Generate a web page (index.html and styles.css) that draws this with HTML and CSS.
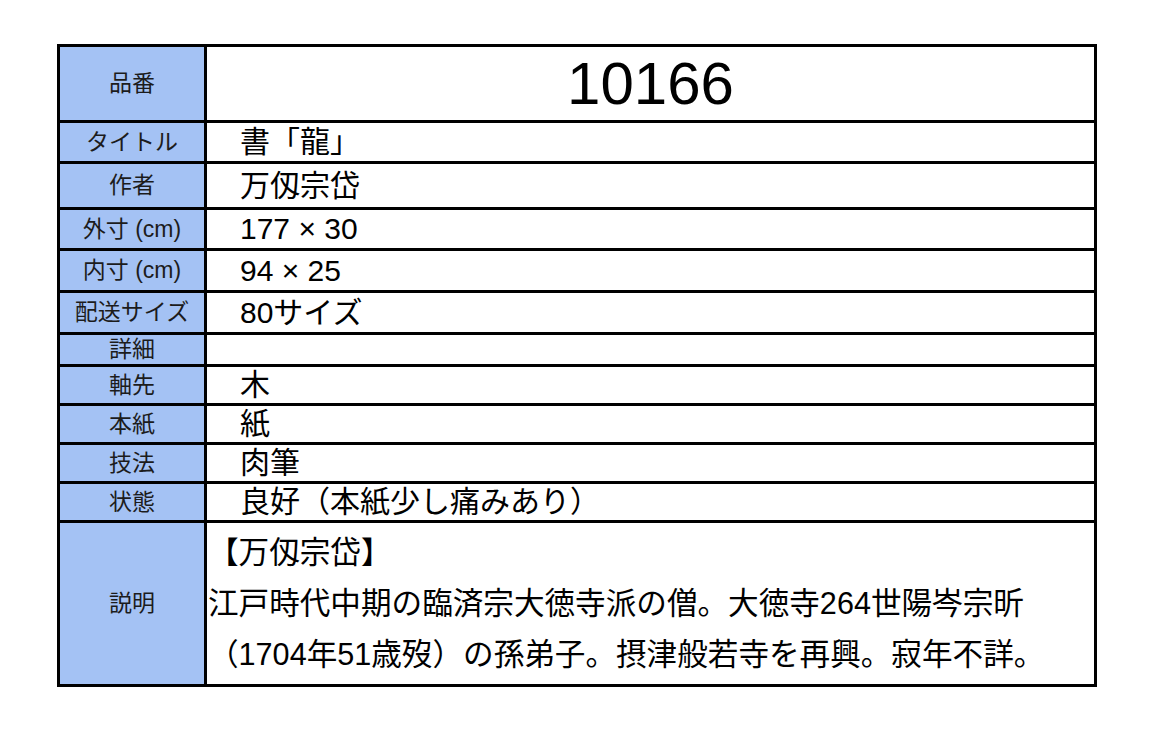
FILE: index.html
```html
<!DOCTYPE html>
<html lang="ja">
<head>
<meta charset="utf-8">
<title>10166</title>
<link rel="stylesheet" href="styles.css">
</head>
<body>
<div class="sheet">
  <div class="label">品番</div>
  <div class="value value-id">10166</div>

  <div class="label">タイトル</div>
  <div class="value">書「龍」</div>

  <div class="label">作者</div>
  <div class="value">万仭宗岱</div>

  <div class="label">外寸 (cm)</div>
  <div class="value">177 × 30</div>

  <div class="label">内寸 (cm)</div>
  <div class="value">94 × 25</div>

  <div class="label">配送サイズ</div>
  <div class="value">80サイズ</div>

  <div class="label">詳細</div>
  <div class="value"></div>

  <div class="label">軸先</div>
  <div class="value">木</div>

  <div class="label">本紙</div>
  <div class="value">紙</div>

  <div class="label">技法</div>
  <div class="value">肉筆</div>

  <div class="label">状態</div>
  <div class="value">良好（本紙少し痛みあり）</div>

  <div class="label">説明</div>
  <div class="value value-desc">
    <p class="desc">【万仭宗岱】<br>江戸時代中期の臨済宗大徳寺派の僧。大徳寺264世陽岑宗昕<br>（1704年51歳歿）の孫弟子。摂津般若寺を再興。寂年不詳。</p>
  </div>
</div>
</body>
</html>
```

FILE: styles.css
```css
html, body {
  margin: 0;
  padding: 0;
  background: #ffffff;
}

body {
  font-family: "Liberation Sans", "Noto Sans CJK JP", sans-serif;
}

.sheet {
  display: grid;
  grid-template-columns: 144px 887px;
  grid-template-rows: 73px 38px 43px 38px 39px 39px 29px 36px 36px 36px 36px 161px;
  gap: 3px;
  padding: 3px;
  background: #000000;
  width: max-content;
  margin: 44px 0 0 57px;
}

.label {
  background: #a4c2f4;
  color: #1c1c1c;
  font-size: 23px;
  line-height: 1;
  display: flex;
  align-items: center;
  justify-content: center;
  white-space: nowrap;
}

.value {
  background: #ffffff;
  color: #000000;
  font-size: 30px;
  line-height: 1;
  display: flex;
  align-items: center;
  padding-left: 33px;
  white-space: nowrap;
}

.value-id {
  justify-content: center;
  padding-left: 0;
  font-size: 60px;
}

.value-desc {
  padding-left: 1px;
}

.desc {
  margin: 0;
  line-height: 51px;
  font-size: 30.6px;
}
```
